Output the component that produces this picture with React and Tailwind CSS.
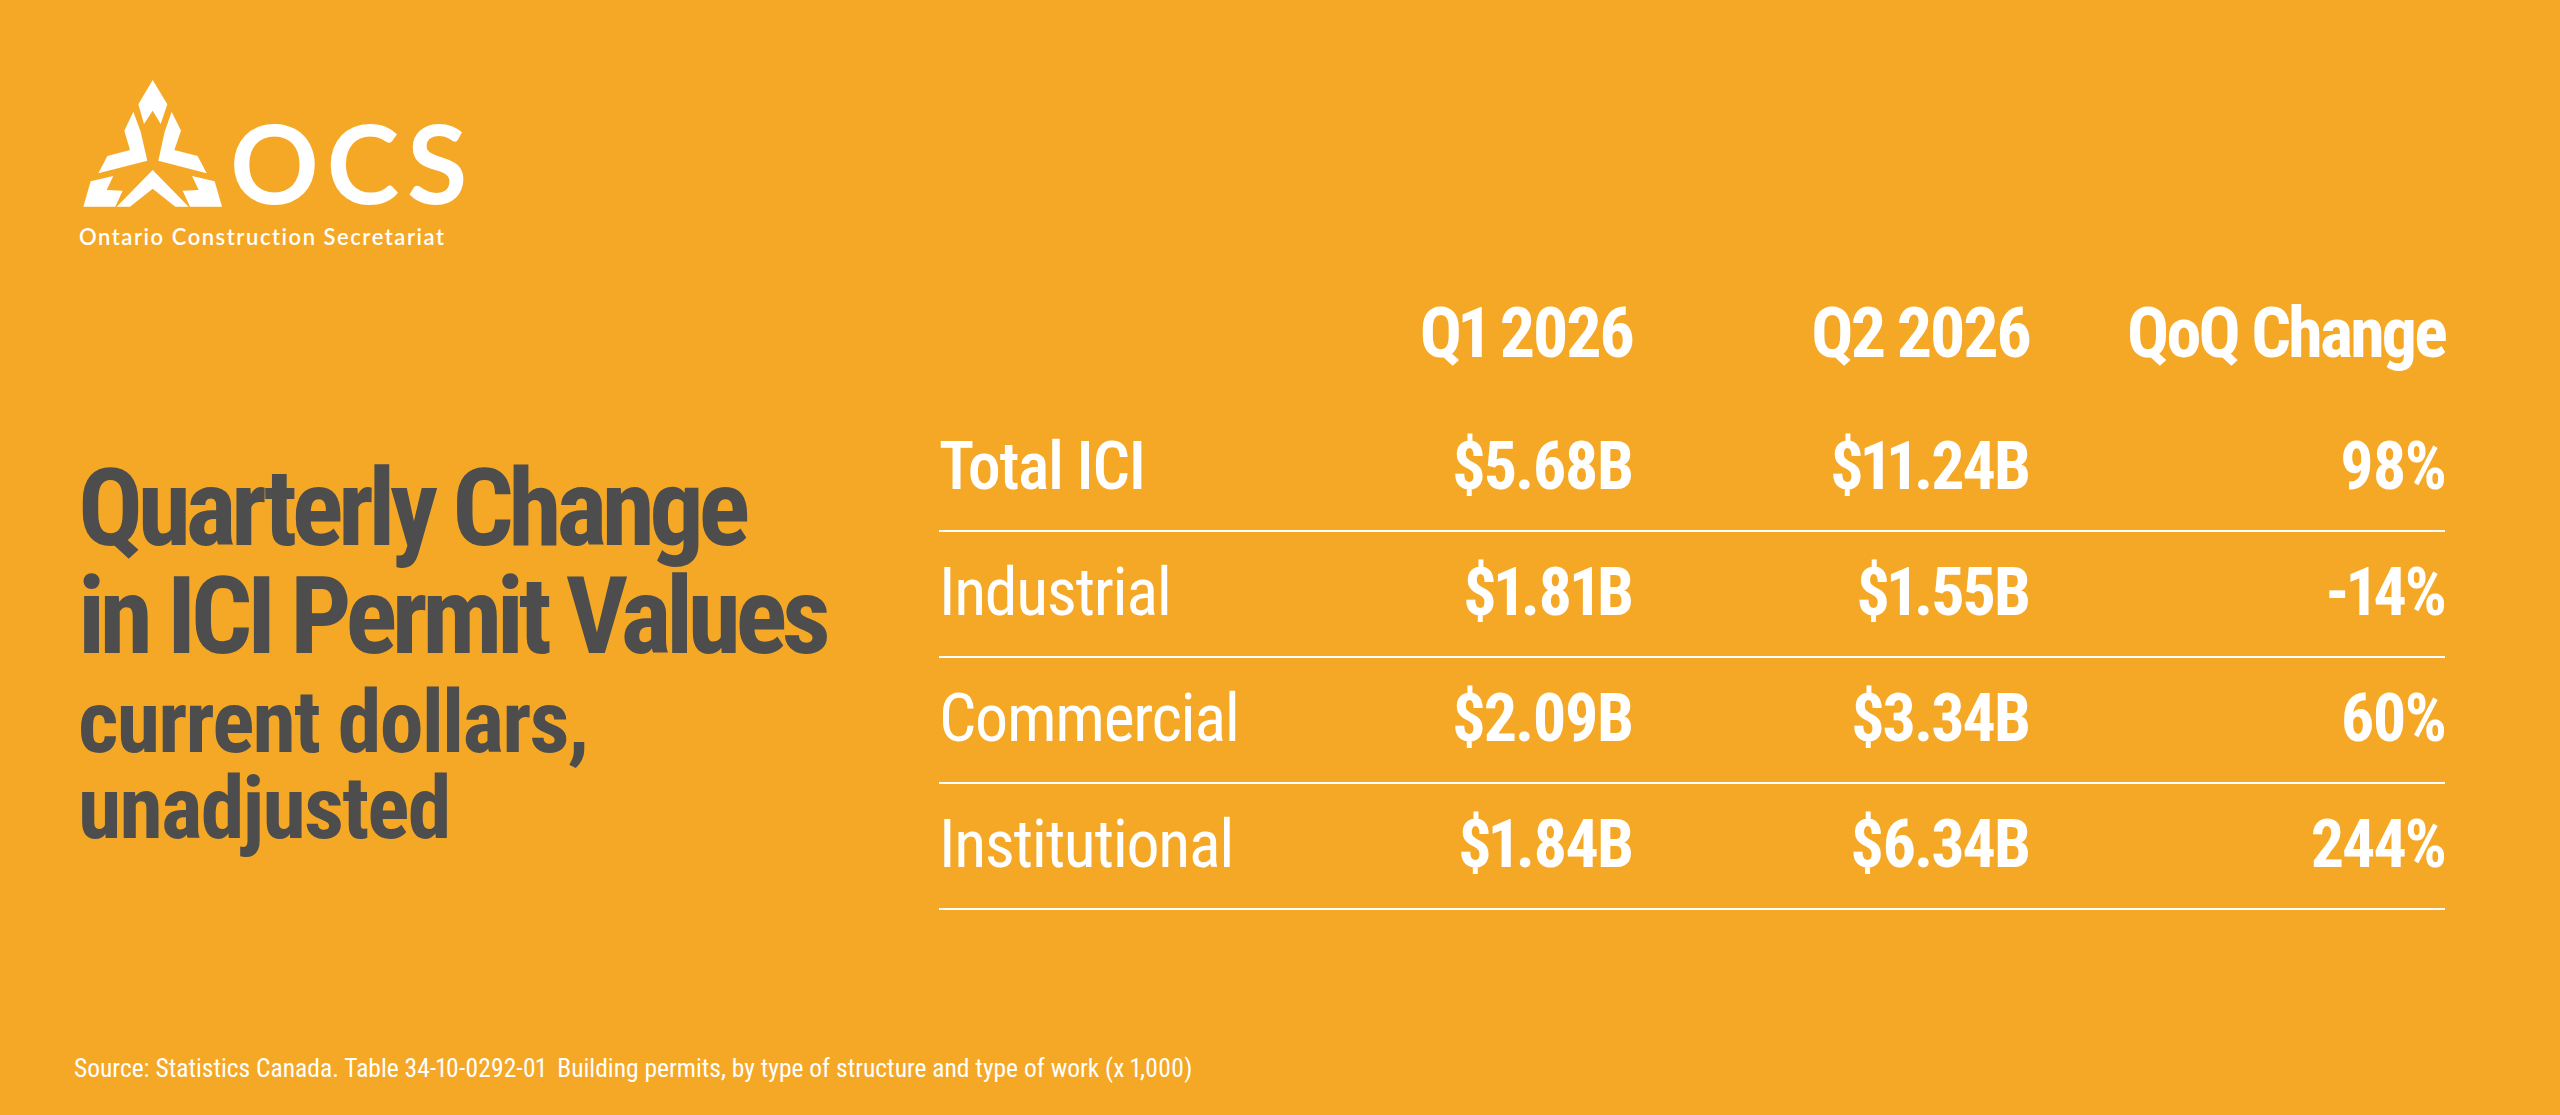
import React from 'react';

const rows = [
  { label: 'Total ICI', q1: '$5.68B', q2: '$11.24B', change: '98%', strong: true },
  { label: 'Industrial', q1: '$1.81B', q2: '$1.55B', change: '-14%' },
  { label: 'Commercial', q1: '$2.09B', q2: '$3.34B', change: '60%' },
  { label: 'Institutional', q1: '$1.84B', q2: '$6.34B', change: '244%' },
];

const OcsMark = () => (
  <svg viewBox="0 0 480 450" className="w-[160px] h-[150px] shrink-0" fill="#ffffff">
    <path d="M248 30 L292 103 L272 162 L248 122 L222 162 L205 103 Z" />
    <path d="M190 125 L212 185 L232 272 L85 310 L112 258 L180 240 L163 182 Z" />
    <path d="M305 125 L333 182 L313 240 L383 258 L410 310 L265 272 L284 185 Z" />
    <path d="M248 300 L356 410 L316 410 L248 356 L180 410 L140 410 Z" />
    <path d="M62 334 L130 318 L110 360 L158 362 L136 410 L40 410 Z" />
    <path d="M434 334 L366 318 L386 360 L338 362 L360 410 L456 410 Z" />
  </svg>
);

const App = () => {
  return (
    <div className="w-[2560px] h-[1115px] bg-[#f5a826] flex flex-col overflow-hidden font-['Roboto_Condensed',sans-serif] proportional-nums">
      {/* Logo */}
      <div className="pl-[70px] pt-[70px] flex flex-col">
        <div className="flex items-start">
          <OcsMark />
          <span className="mt-[37px] text-white font-['Lato',sans-serif] font-bold text-[110px] leading-[108px] tracking-[0.07em]">
            OCS
          </span>
        </div>
        <div className="ml-[9px] mt-[7px] text-white font-['Lato',sans-serif] font-semibold text-[22px] leading-[20px] tracking-[0.07em]">
          Ontario Construction Secretariat
        </div>
      </div>

      {/* Title + table */}
      <div className="flex pl-[78px] mt-[51px]">
        <div className="w-[861px] pt-[156px] text-[#4d4d4d] font-bold">
          <h1 className="text-[108px] leading-[108px] tracking-[-0.05em]">
            Quarterly Change
            <br />
            in ICI Permit Values
          </h1>
          <p className="mt-[9px] text-[88px] leading-[86px] tracking-[-0.02em]">
            current dollars,
            <br />
            unadjusted
          </p>
        </div>

        <div className="w-[1506px] text-white">
          <div className="grid grid-cols-[293px_400px_397px_416px] text-[70px] leading-[70px] font-bold text-right tracking-[-0.04em]">
            <div />
            <div>Q1 2026</div>
            <div>Q2 2026</div>
            <div>QoQ Change</div>
          </div>
          <div className="mt-[38px]">
            {rows.map((r) => (
              <div
                key={r.label}
                className="grid grid-cols-[293px_400px_397px_416px] pt-[28px] pb-[30px] border-b-2 border-white text-[66px] leading-[66px]"
              >
                <div className={`whitespace-nowrap tracking-[-0.02em] ${r.strong ? 'font-medium' : 'font-normal'}`}>
                  {r.label}
                </div>
                <div className="text-right font-bold tracking-[-0.03em]">{r.q1}</div>
                <div className="text-right font-bold tracking-[-0.03em]">{r.q2}</div>
                <div className="text-right font-bold tracking-[-0.03em]">{r.change}</div>
              </div>
            ))}
          </div>
        </div>
      </div>

      {/* Source */}
      <div className="mt-auto pl-[74px] pb-[34px] text-white">
        <p className="text-[25.5px] leading-[25px] whitespace-pre">
          Source: Statistics Canada. Table 34-10-0292-01  Building permits, by type of structure and type of work (x 1,000)
        </p>
      </div>
    </div>
  );
};

export default App;
